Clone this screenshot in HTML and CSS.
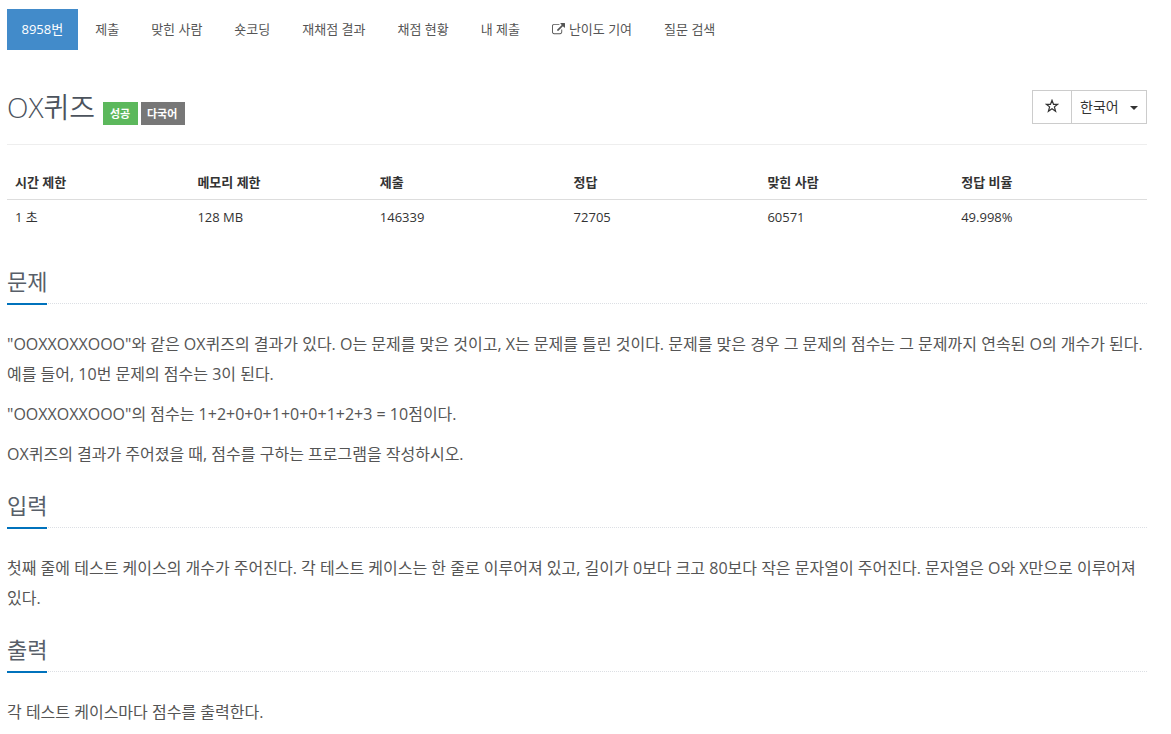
FILE: index.html
```html
<!DOCTYPE html>
<html lang="ko">
<head>
    <meta charset="UTF-8">
    <meta name="viewport" content="width=device-width, initial-scale=1.0">
    <title>8958번: OX퀴즈</title>
    <link rel="stylesheet" href="styles.css">
</head>
<body>
    <ul class="problem-menu">
        <li class="active"><a>8958번</a></li>
        <li><a>제출</a></li>
        <li><a>맞힌 사람</a></li>
        <li><a>숏코딩</a></li>
        <li><a>재채점 결과</a></li>
        <li><a>채점 현황</a></li>
        <li><a>내 제출</a></li>
        <li><a><svg class="icon-link" viewBox="0 0 1792 1792"><path fill="currentColor" d="M1408 928v320q0 119-84.500 203.500t-203.500 84.500h-832q-119 0-203.500-84.500t-84.500-203.500v-832q0-119 84.500-203.500t203.500-84.500h704q14 0 23 9t9 23v64q0 14-9 23t-23 9h-704q-66 0-113 47t-47 113v832q0 66 47 113t113 47h832q66 0 113-47t47-113v-320q0-14 9-23t23-9h64q14 0 23 9t9 23zm384-864v512q0 26-19 45t-45 19-45-19l-176-176-652 652q-10 10-23 10t-23-10l-114-114q-10-10-10-23t10-23l652-652-176-176q-19-19-19-45t19-45 45-19h512q26 0 45 19t19 45z"/></svg>난이도 기여</a></li>
        <li><a>질문 검색</a></li>
    </ul>

    <div class="page-header">
        <h1>OX<span class="ko">퀴즈</span></h1>
        <span class="label label-success">성공</span>
        <span class="label label-lang">다국어</span>
        <div class="btn-group">
            <button class="btn btn-star"><svg class="icon-star" viewBox="0 0 14 14"><path d="M7 1.300L8.500 5.300H12.700L9.400 7.900L10.600 12.200L7 9.700L3.400 12.200L4.600 7.900L1.300 5.300H5.500Z"/></svg></button>
            <button class="btn btn-lang">한국어 <span class="caret"></span></button>
        </div>
    </div>

    <table class="problem-info">
        <thead>
            <tr><th>시간 제한</th><th>메모리 제한</th><th>제출</th><th>정답</th><th>맞힌 사람</th><th>정답 비율</th></tr>
        </thead>
        <tbody>
            <tr><td>1 초</td><td>128 MB</td><td>146339</td><td>72705</td><td>60571</td><td>49.998%</td></tr>
        </tbody>
    </table>

    <section class="problem-section">
        <div class="headline"><h2>문제</h2></div>
        <div class="problem-text">
            <p>"OOXXOXXOOO"와 같은 OX퀴즈의 결과가 있다. O는 문제를 맞은 것이고, X는 문제를 틀린 것이다. 문제를 맞은 경우 그 문제의 점수는 그 문제까지 연속된 O의 개수가 된다.<br>예를 들어, 10번 문제의 점수는 3이 된다.</p>
            <p>"OOXXOXXOOO"의 점수는 1+2+0+0+1+0+0+1+2+3 = 10점이다.</p>
            <p>OX퀴즈의 결과가 주어졌을 때, 점수를 구하는 프로그램을 작성하시오.</p>
        </div>
    </section>

    <section class="problem-section">
        <div class="headline"><h2>입력</h2></div>
        <div class="problem-text">
            <p>첫째 줄에 테스트 케이스의 개수가 주어진다. 각 테스트 케이스는 한 줄로 이루어져 있고, 길이가 0보다 크고 80보다 작은 문자열이 주어진다. 문자열은 O와 X만으로 이루어져<br>있다.</p>
        </div>
    </section>

    <section class="problem-section">
        <div class="headline"><h2>출력</h2></div>
        <div class="problem-text">
            <p>각 테스트 케이스마다 점수를 출력한다.</p>
        </div>
    </section>
</body>
</html>
```
FILE: styles.css
```css
* {
    box-sizing: border-box;
}
body {
    margin: 0;
    padding: 9px 24px 0 7px;
    height: 734px;
    overflow: hidden;
    font-family: "Open Sans", "Noto Sans CJK KR", sans-serif;
    font-size: 13px;
    line-height: 20px;
    color: #333;
    background-color: #fff;
}
.problem-menu {
    display: flex;
    gap: 3px;
    height: 41px;
    margin: 0;
    padding: 0;
    list-style: none;
    white-space: nowrap;
}
.problem-menu a {
    display: block;
    height: 41px;
    padding: 10px 14.500px;
    font-size: 13px;
    color: #555;
}
.problem-menu .active a {
    background-color: #428bca;
    color: #fff;
}
.icon-link {
    width: 13px;
    height: 13px;
    margin-right: 4px;
    vertical-align: -2px;
}
.page-header {
    display: flex;
    height: 95px;
    padding-top: 40px;
    border-bottom: 1px solid #eee;
}
.page-header h1 {
    width: 88px;
    margin: 0 8px 0 0;
    font-size: 28px;
    font-weight: 300;
    line-height: 34px;
    white-space: nowrap;
    color: #4c535d;
}
.page-header .ko {
    font-weight: 350;
}
.label {
    height: 23px;
    margin: 12px 3px 0 0;
    padding: 0 7px;
    font-size: 11px;
    font-weight: 700;
    line-height: 23px;
    color: #fff;
}
.label-success {
    width: 35px;
    background-color: #5cb85c;
}
.label-lang {
    width: 44px;
    padding: 0 6px;
    background-color: #777;
}
.btn-group {
    display: flex;
    height: 34px;
    margin-left: auto;
    border: 1px solid #ccc;
}
.btn {
    padding: 0;
    border: 0;
    background: none;
    font-family: inherit;
    font-size: 14px;
    line-height: 20px;
    color: #333;
}
.btn-star {
    width: 38px;
}
.icon-star {
    display: block;
    width: 14px;
    height: 14px;
    margin: 0 auto 2px;
    fill: none;
    stroke: #333;
    stroke-width: 1.2;
}
.btn-lang {
    display: flex;
    align-items: center;
    justify-content: space-between;
    width: 75px;
    padding: 0 8px 1px;
    border-left: 1px solid #ccc;
}
.caret {
    margin-top: 3px;
    border-top: 4px solid #333;
    border-right: 4px solid transparent;
    border-left: 4px solid transparent;
}
.problem-info {
    width: 100%;
    margin-top: 20px;
    border-collapse: collapse;
    table-layout: fixed;
    line-height: 18px;
}
.problem-info th, .problem-info td {
    padding: 8px;
    text-align: left;
}
.problem-info th {
    width: 17%;
    border-bottom: 1px solid #ddd;
}
.problem-info th:nth-child(-n+2) {
    width: 16%;
}
.headline {
    display: flex;
    height: 38px;
    border-bottom: 1px dotted #dcdfe4;
}
.headline h2 {
    height: 39px;
    margin: 0;
    border-bottom: 2px solid #0072bc;
    font-size: 22px;
    font-weight: 400;
    line-height: 31px;
    color: #585f69;
}
.problem-section {
    margin-top: 21px;
}
.problem-info + .problem-section {
    margin-top: 32px;
}
.problem-text {
    padding-top: 25px;
    font-size: 16px;
    line-height: 30px;
    color: #555;
}
.problem-text p {
    margin: 0 0 10px;
    white-space: nowrap;
}
```
